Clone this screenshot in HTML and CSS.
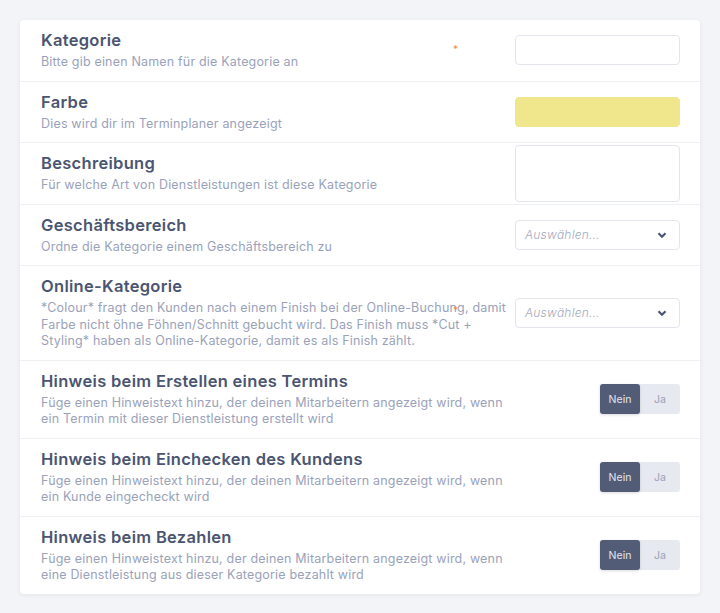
FILE: index.html
```html
<!DOCTYPE html>
<html lang="de">
<head>
    <meta charset="UTF-8">
    <title>Kategorie</title>
    <link rel="stylesheet" href="styles.css">
</head>
<body>
    <div class="card">
        <div class="row">
            <div class="text">
                <div class="title">Kategorie</div>
                <div class="desc">Bitte gib einen Namen für die Kategorie an</div>
            </div>
            <span class="required">*</span>
            <input type="text" class="field">
        </div>

        <div class="row">
            <div class="text">
                <div class="title">Farbe</div>
                <div class="desc">Dies wird dir im Terminplaner angezeigt</div>
            </div>
            <div class="field color"></div>
        </div>

        <div class="row">
            <div class="text">
                <div class="title">Beschreibung</div>
                <div class="desc">Für welche Art von Dienstleistungen ist diese Kategorie</div>
            </div>
            <textarea class="field area"></textarea>
        </div>

        <div class="row">
            <div class="text">
                <div class="title">Geschäftsbereich</div>
                <div class="desc">Ordne die Kategorie einem Geschäftsbereich zu</div>
            </div>
            <div class="field select">
                <span>Auswählen...</span>
                <svg width="10" height="8" viewBox="0 0 10 8"><path d="M1.5 2.2 5 5.7 8.5 2.2" fill="none" stroke="#4b5571" stroke-width="2.2"/></svg>
            </div>
        </div>

        <div class="row">
            <div class="text">
                <div class="title">Online-Kategorie</div>
                <div class="desc">*Colour* fragt den Kunden nach einem Finish bei der Online-Buchung, damit Farbe nicht öhne Föhnen/Schnitt gebucht wird. Das Finish muss *Cut + Styling* haben als Online-Kategorie, damit es als Finish zählt.</div>
            </div>
            <span class="required low">*</span>
            <div class="field select">
                <span>Auswählen...</span>
                <svg width="10" height="8" viewBox="0 0 10 8"><path d="M1.5 2.2 5 5.7 8.5 2.2" fill="none" stroke="#4b5571" stroke-width="2.2"/></svg>
            </div>
        </div>

        <div class="row">
            <div class="text">
                <div class="title">Hinweis beim Erstellen eines Termins</div>
                <div class="desc">Füge einen Hinweistext hinzu, der deinen Mitarbeitern angezeigt wird, wenn ein Termin mit dieser Dienstleistung erstellt wird</div>
            </div>
            <div class="toggle">
                <button class="opt active">Nein</button>
                <button class="opt">Ja</button>
            </div>
        </div>

        <div class="row">
            <div class="text">
                <div class="title">Hinweis beim Einchecken des Kundens</div>
                <div class="desc">Füge einen Hinweistext hinzu, der deinen Mitarbeitern angezeigt wird, wenn ein Kunde eingecheckt wird</div>
            </div>
            <div class="toggle">
                <button class="opt active">Nein</button>
                <button class="opt">Ja</button>
            </div>
        </div>

        <div class="row">
            <div class="text">
                <div class="title">Hinweis beim Bezahlen</div>
                <div class="desc">Füge einen Hinweistext hinzu, der deinen Mitarbeitern angezeigt wird, wenn eine Dienstleistung aus dieser Kategorie bezahlt wird</div>
            </div>
            <div class="toggle">
                <button class="opt active">Nein</button>
                <button class="opt">Ja</button>
            </div>
        </div>
    </div>
</body>
</html>
```

FILE: styles.css
```css
* {
    margin: 0;
    padding: 0;
    box-sizing: border-box;
}

body {
    font-family: 'Inter', sans-serif;
    background: #f3f4f7;
    padding: 20px;
}

.card {
    width: 680px;
    background: #fff;
    border-radius: 4px;
    box-shadow: 0 1px 4px rgba(40, 50, 80, 0.08);
}

.row {
    position: relative;
    display: flex;
    align-items: center;
    padding: 0 20px 0 21px;
    border-bottom: 1px solid #eef0f4;
}

.row:last-child {
    border-bottom: none;
}

.text {
    width: 470px;
    margin-right: 4px;
    padding: 9px 0 10px;
}

.title {
    font-size: 16.5px;
    font-weight: 600;
    line-height: 22px;
    letter-spacing: 0.3px;
    color: #4b5571;
}

.desc {
    margin-top: 3px;
    font-size: 12.5px;
    line-height: 16.5px;
    letter-spacing: 0.18px;
    color: #9aa2ba;
}

.required {
    position: absolute;
    left: 433px;
    top: 23px;
    color: #f58a3b;
    font-size: 10px;
}

.required.low {
    top: 38px;
}

.field {
    width: 165px;
    height: 30px;
    border: 1px solid #e2e5ed;
    border-radius: 4px;
    background: #fff;
    outline: none;
    font-family: inherit;
}

.field.color {
    background: #f0e68c;
    border-color: #f0e68c;
}

.field.area {
    height: 57px;
    resize: none;
}

.field.select {
    display: flex;
    align-items: center;
    justify-content: space-between;
    padding: 0 12px 0 9px;
    font-size: 12px;
    font-style: italic;
    font-weight: 300;
    letter-spacing: 0.2px;
    color: #a3a9bb;
}

.toggle {
    display: flex;
    margin-left: auto;
    background: #e6e9ef;
    border-radius: 3px;
}

.opt {
    width: 40px;
    height: 30px;
    border: none;
    border-radius: 3px;
    background: transparent;
    font-family: inherit;
    font-size: 10.5px;
    color: #9aa2ba;
}

.opt.active {
    background: #525c77;
    color: #e3e6ee;
    box-shadow: 0 1px 3px rgba(0, 0, 0, 0.15);
}
```
